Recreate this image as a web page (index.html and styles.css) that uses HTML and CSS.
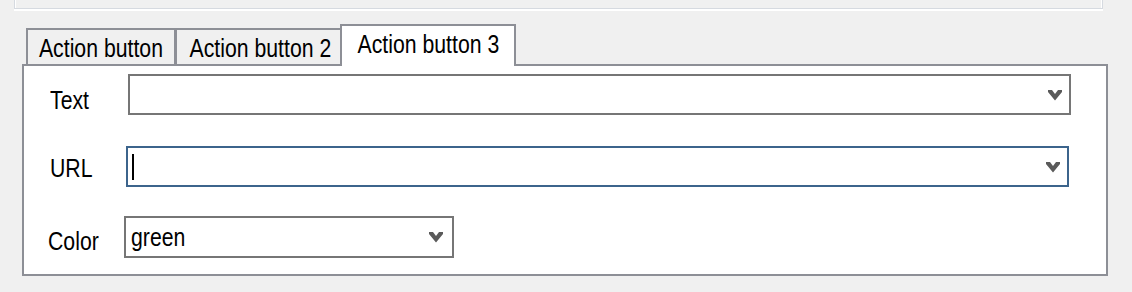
FILE: index.html
```html
<!DOCTYPE html>
<html>
<head>
<meta charset="utf-8">
<link rel="stylesheet" href="styles.css">
</head>
<body>
<div class="topbox"></div>
<div class="tabctl">
  <div class="tabstrip">
    <div class="tab tab-first"><span class="txt txt-c">Action button</span></div>
    <div class="tab tab-mid"><span class="txt txt-c">Action button 2</span></div>
    <div class="tab tab-active"><span class="txt txt-c">Action button 3</span></div>
  </div>
  <div class="panel">
    <div class="row row-text">
      <span class="lbl lbl-text"><span class="txt">Text</span></span>
      <div class="combo combo-wide">
        <span class="value"></span>
        <svg class="chev" viewBox="0 0 14 11"><polygon points="0,0 4,0 7,4 10,0 14,0 14,2 7,10.5 0,2"/></svg>
      </div>
    </div>
    <div class="row row-url">
      <span class="lbl lbl-url"><span class="txt">URL</span></span>
      <div class="combo combo-wide combo-focus">
        <span class="caret"></span>
        <span class="value"></span>
        <svg class="chev" viewBox="0 0 14 11"><polygon points="0,0 4,0 7,4 10,0 14,0 14,2 7,10.5 0,2"/></svg>
      </div>
    </div>
    <div class="row row-color">
      <span class="lbl lbl-color"><span class="txt">Color</span></span>
      <div class="combo combo-short">
        <span class="value"><span class="txt">green</span></span>
        <svg class="chev" viewBox="0 0 14 11"><polygon points="0,0 4,0 7,4 10,0 14,0 14,2 7,10.5 0,2"/></svg>
      </div>
    </div>
  </div>
</div>
</body>
</html>
```

FILE: styles.css
```css
html, body {
  margin: 0;
  padding: 0;
}
body {
  background: #f0f0f0;
  width: 1132px;
  height: 292px;
  overflow: hidden;
  font-family: "Liberation Sans", Arial, sans-serif;
  font-size: 25px;
  color: #000;
}
.txt {
  display: inline-block;
  transform: scaleX(0.85);
  transform-origin: left center;
  white-space: nowrap;
}
.txt-c {
  transform-origin: center center;
}
.topbox {
  margin: 0 29px 0 14px;
  height: 8px;
  border: 1px solid #d6dae0;
  border-top: none;
  box-shadow: inset 1px 0 0 #fff, inset -1px 0 0 #fff, 0 2px 0 #fff;
}
.tabctl {
  margin: 15px 0 0 22px;
  width: 1086px;
}
.tabstrip {
  display: flex;
  align-items: flex-end;
  height: 40px;
  padding-left: 4px;
}
.tab {
  box-sizing: border-box;
  height: 36px;
  border-top: 2px solid #8d8f96;
  padding-top: 4px;
  line-height: 28px;
  text-align: center;
  white-space: nowrap;
  background: #f0f0f0;
}
.tab-first {
  width: 150px;
  border-left: 2px solid #8d8f96;
  border-right: 2px solid #8d8f96;
}
.tab-mid {
  width: 164px;
  border-left: 1px solid #8d8f96;
}
.tab-active {
  width: 176px;
  height: 42px;
  border-left: 2px solid #8d8f96;
  border-right: 2px solid #8d8f96;
  background: #fff;
  margin-bottom: -2px;
  position: relative;
  z-index: 1;
}
.panel {
  box-sizing: border-box;
  height: 212px;
  border: 2px solid #8d8f96;
  background: #fff;
  padding-top: 8px;
  display: flex;
  flex-direction: column;
}
.row {
  display: flex;
  align-items: flex-start;
}
.row-text { padding-left: 26px; }
.row-url { padding-left: 26px; margin-top: 31px; }
.row-color { padding-left: 24px; margin-top: 29px; }
.lbl {
  line-height: 28px;
  white-space: nowrap;
}
.lbl-text { width: 78px; padding-top: 12px; }
.lbl-url { width: 76px; padding-top: 8px; }
.lbl-color { width: 76px; padding-top: 11px; }
.combo {
  box-sizing: border-box;
  height: 41px;
  border: 2px solid #767676;
  background: #fff;
  display: flex;
  align-items: center;
  padding: 0 7px 0 5px;
}
.combo-wide { width: 943px; }
.combo-short { width: 330px; height: 42px; padding-right: 9px; }
.combo-focus { border-color: #3c648c; }
.value {
  flex: 1;
  line-height: 28px;
  white-space: nowrap;
}
.caret {
  width: 2px;
  height: 26px;
  background: #000;
  margin-left: -1px;
  flex: none;
}
.chev {
  width: 14px;
  height: 11px;
  flex: none;
  fill: #5a5a5a;
  margin-top: 1px;
}
```
